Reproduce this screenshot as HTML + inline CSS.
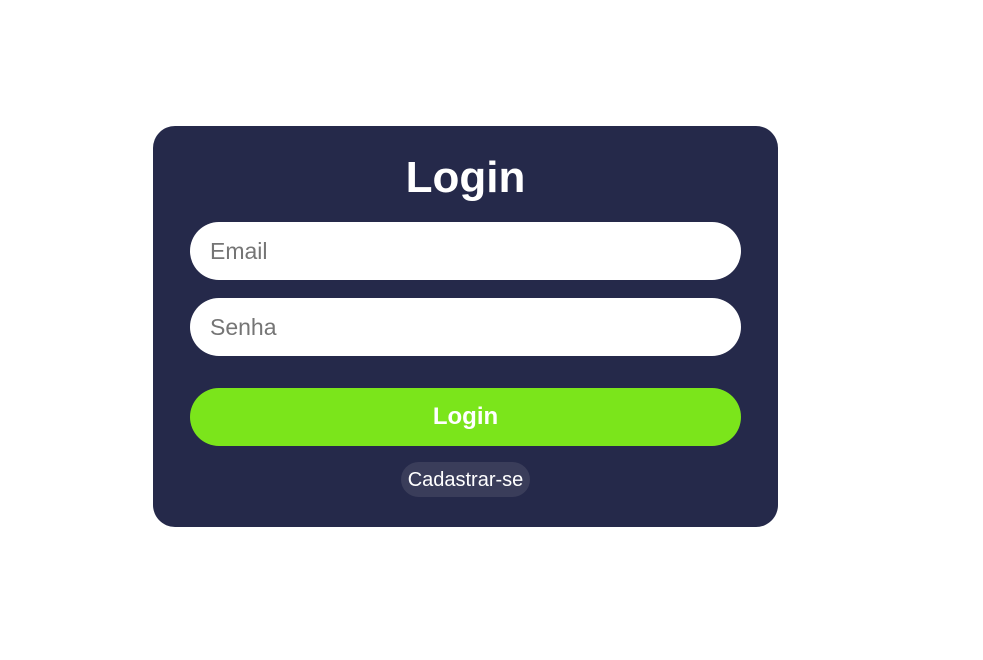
<!DOCTYPE html>
<html><head><style>
body{margin:0;background:#fff;width:983px;height:660px;position:relative;font-family:"Liberation Sans",Arial,sans-serif}
.card{position:absolute;left:153px;top:126px;width:625px;height:401px;background:#25294a;border-radius:22px}
h1{position:absolute;left:0;width:625px;top:153px;margin:0;text-align:center;color:#fff;font-size:44px;font-weight:bold;line-height:50px}
.in{position:absolute;left:190px;width:551px;height:58px;background:#fff;border-radius:29px;color:#757575;font-size:23px;line-height:58px;box-sizing:border-box;padding-left:20px}
.btn{position:absolute;left:190px;top:388px;width:551px;height:58px;background:#7be51b;border-radius:29px;color:#fff;font-weight:bold;font-size:24px;line-height:58px;text-align:center}
.cad{position:absolute;left:401px;top:462px;width:129px;height:35px;background:#3a3d5a;border-radius:18px;color:#fff;font-size:20px;line-height:37px;text-align:center}
</style></head><body>
<div class="card"></div>
<h1 style="left:153px">Login</h1>
<div class="in" style="top:222px">Email</div>
<div class="in" style="top:298px">Senha</div>
<div class="btn">Login</div>
<div class="cad">Cadastrar-se</div>
</body></html>
